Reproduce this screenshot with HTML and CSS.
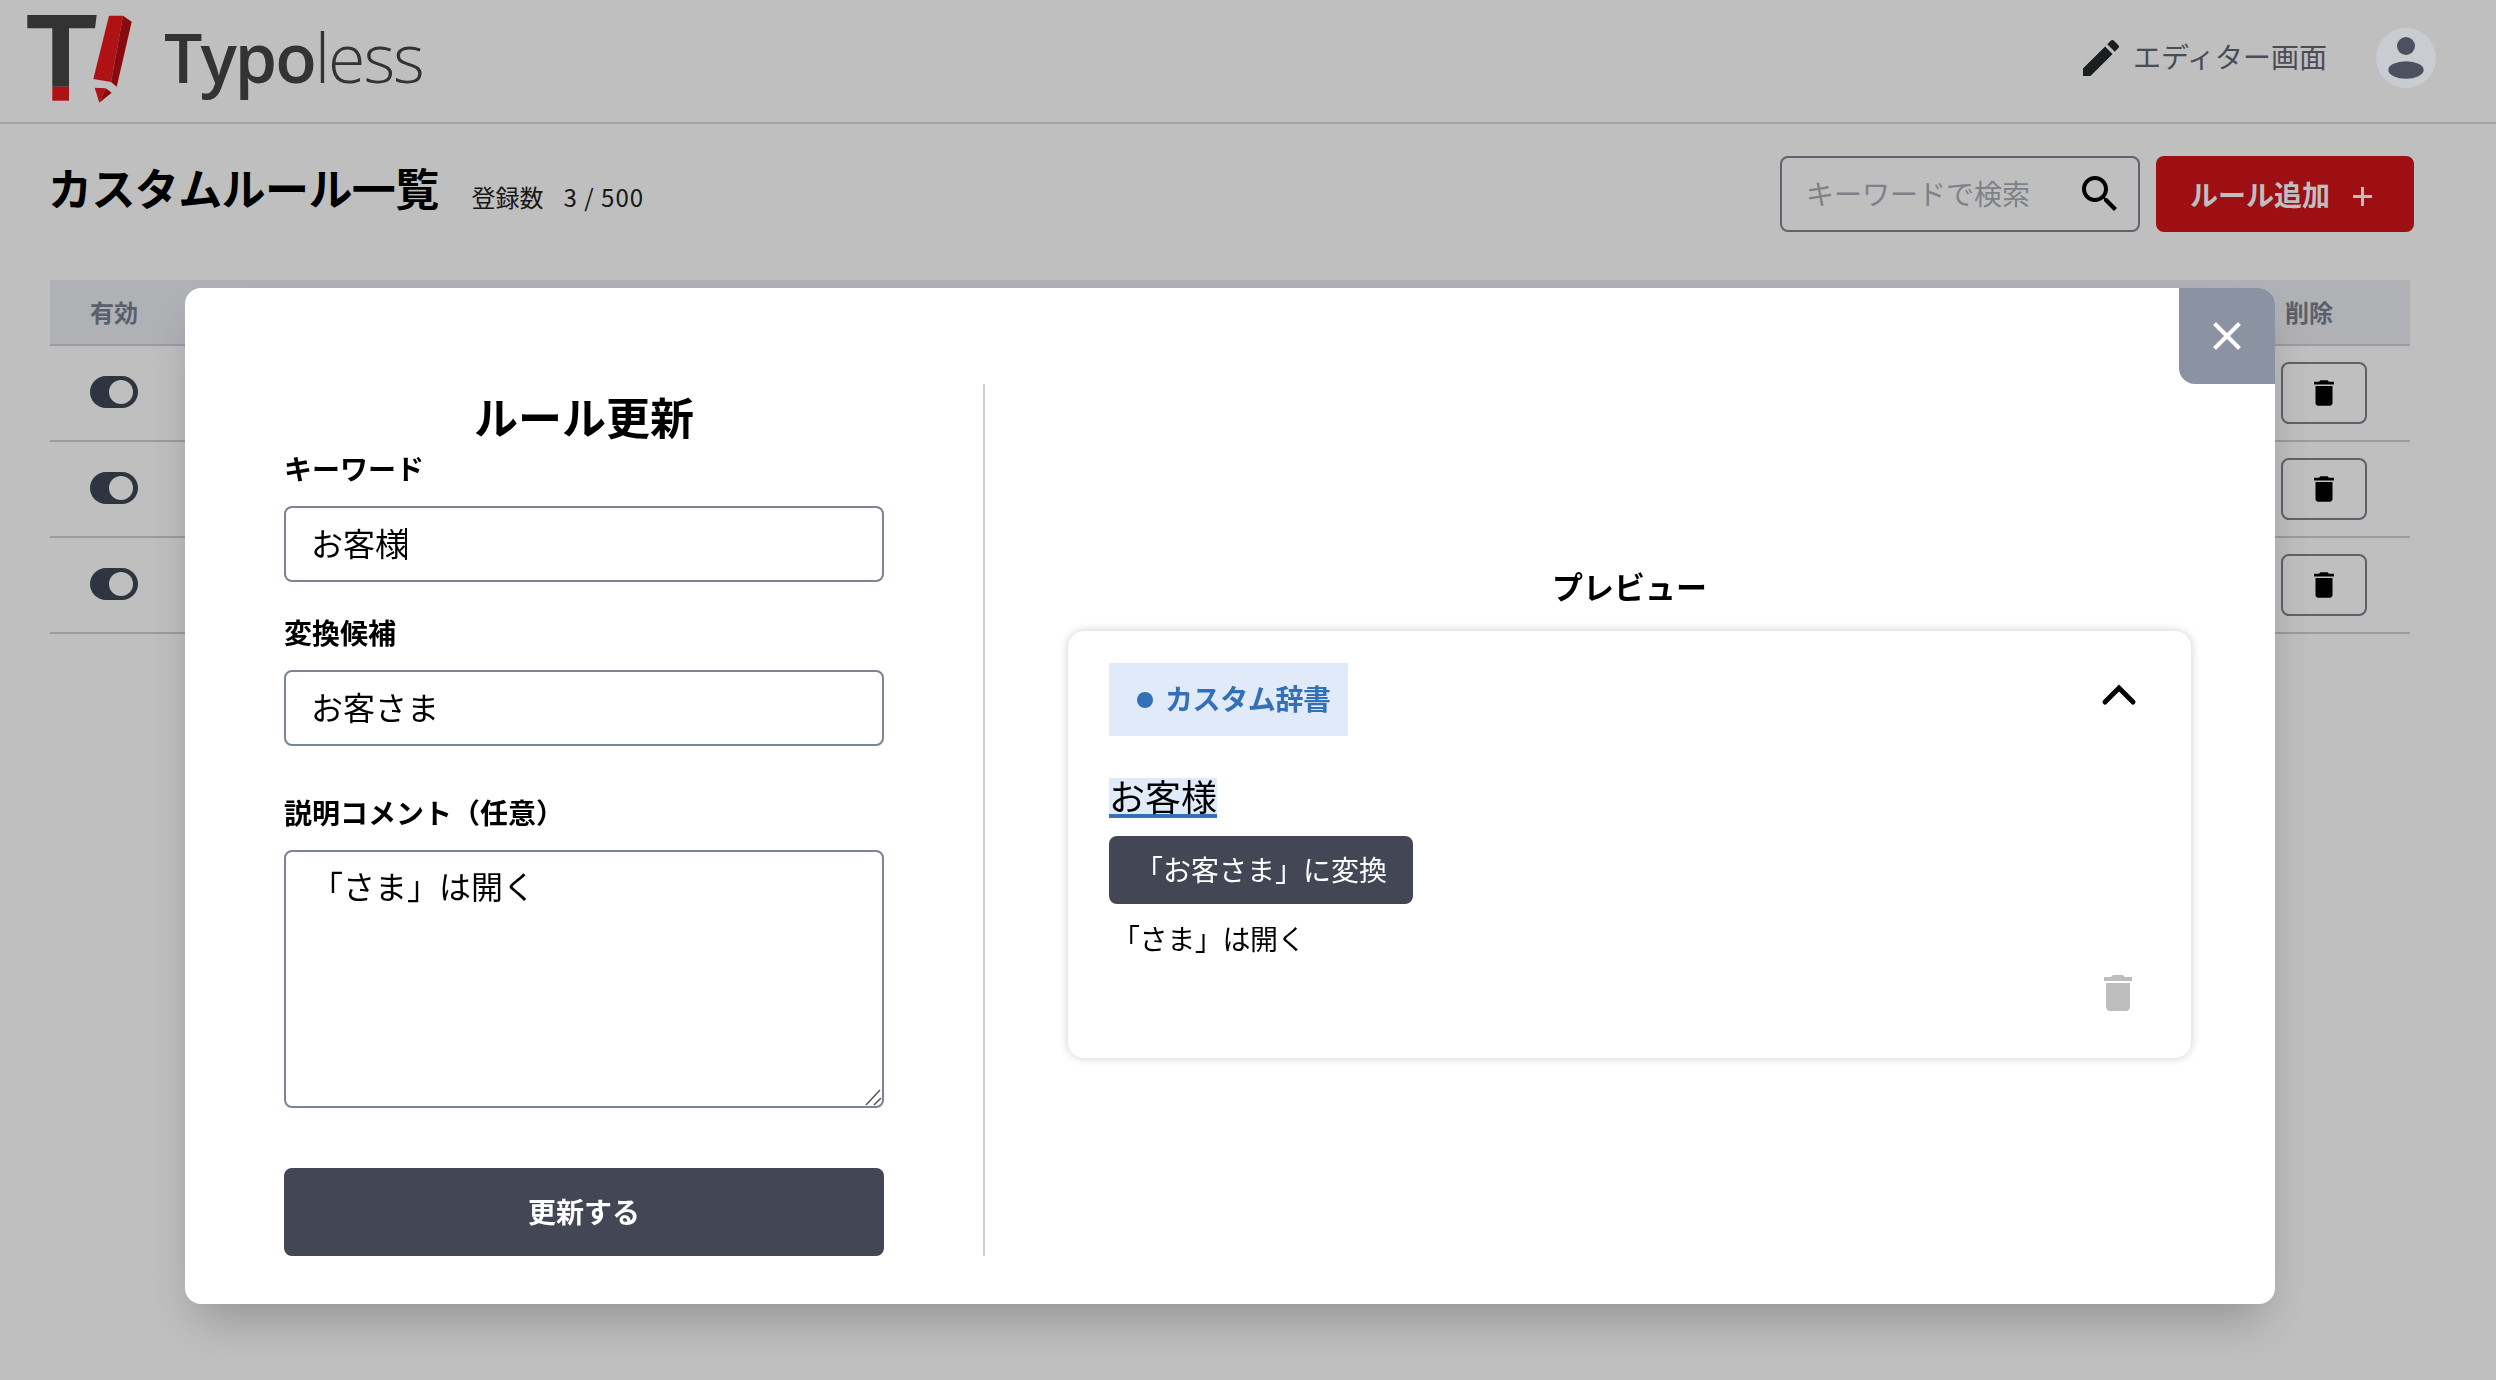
FILE: index.html
```html
<!DOCTYPE html>
<html lang="ja">
<head>
    <meta charset="UTF-8">
    <meta name="viewport" content="width=device-width, initial-scale=1.0">
    <title>カスタムルール一覧 - Typoless</title>
    <link rel="stylesheet" href="styles.css">
</head>
<body>
    <svg class="icon-defs" width="0" height="0" aria-hidden="true">
        <symbol id="icon-delete" viewBox="0 0 24 24">
            <path d="M6 19c0 1.1.9 2 2 2h8c1.1 0 2-.9 2-2V7H6v12zM19 4h-3.5l-1-1h-5l-1 1H5v2h14V4z"/>
        </symbol>
    </svg>

    <header class="site-header">
        <svg class="logo-mark" viewBox="0 0 130 110" aria-hidden="true">
            <path fill="#444" d="M17.3 10H86.7L85 23.3H59V81.7H42.3V23.3H17.3z"/>
            <path fill="#ea181c" d="M42.3 81.7H59V95.7H42.3z"/>
            <path fill="#ea181c" d="M99 10.7H113L101 77 83.3 74z"/>
            <path fill="#b80d13" d="M113 10.7L121.7 16.7 106.7 81.7 101 77z"/>
            <path fill="#ea181c" d="M84.7 82.7L95.7 83.3 89.3 97.7z"/>
            <path fill="#b80d13" d="M95.7 83.3L101.7 87.7 89.3 97.7z"/>
        </svg>
        <div class="logo-text"><span class="logo-strong">Typo</span><span class="logo-light">less</span></div>
        <nav class="header-nav">
            <svg class="icon-edit" viewBox="0 0 24 24" aria-hidden="true">
                <path d="M3 17.25V21h3.75L17.81 9.94l-3.75-3.75L3 17.25zM20.71 7.04c.39-.39.39-1.02 0-1.41l-2.34-2.34c-.39-.39-1.02-.39-1.41 0l-1.83 1.83 3.75 3.75 1.83-1.83z"/>
            </svg>
            <span class="nav-label">エディター画面</span>
            <svg class="avatar" viewBox="0 0 60 60" aria-hidden="true">
                <circle cx="30" cy="30" r="30" fill="#c9ccd0"/>
                <circle cx="30" cy="18" r="9" fill="#4c5060"/>
                <ellipse cx="30" cy="42" rx="17.7" ry="8.7" fill="#4c5060"/>
            </svg>
        </nav>
    </header>

    <main class="rules-page">
        <div class="page-head">
            <h1 class="page-title">カスタムルール一覧</h1>
            <span class="rule-count">登録数<span class="rule-count-value">3 / 500</span></span>
            <div class="search-box">
                <input class="search-input" type="text" placeholder="キーワードで検索">
                <svg class="icon-search" viewBox="0 0 24 24" aria-hidden="true">
                    <path d="M15.5 14h-.79l-.28-.27C15.41 12.59 16 11.11 16 9.5 16 5.91 13.09 3 9.5 3S3 5.91 3 9.5 5.91 16 9.5 16c1.61 0 3.09-.59 4.23-1.57l.27.28v.79l5 4.99L20.49 19l-4.99-5zm-6 0C7.01 14 5 11.99 5 9.5S7.01 5 9.5 5 14 7.01 14 9.5 11.99 14 9.5 14z"/>
                </svg>
            </div>
            <button class="add-button">
                <span>ルール追加</span>
                <svg class="icon-plus" viewBox="0 0 21 21" aria-hidden="true"><path d="M10.5 1V20M1 10.5H20"/></svg>
            </button>
        </div>

        <div class="rules-table">
            <div class="table-row table-head">
                <span class="col-active">有効</span>
                <span class="col-delete">削除</span>
            </div>
            <div class="table-row">
                <div class="col-active"><span class="toggle"><span class="toggle-knob"></span></span></div>
                <div class="col-delete"><button class="delete-button"><svg class="icon-delete"><use href="#icon-delete"/></svg></button></div>
            </div>
            <div class="table-row">
                <div class="col-active"><span class="toggle"><span class="toggle-knob"></span></span></div>
                <div class="col-delete"><button class="delete-button"><svg class="icon-delete"><use href="#icon-delete"/></svg></button></div>
            </div>
            <div class="table-row">
                <div class="col-active"><span class="toggle"><span class="toggle-knob"></span></span></div>
                <div class="col-delete"><button class="delete-button"><svg class="icon-delete"><use href="#icon-delete"/></svg></button></div>
            </div>
        </div>
    </main>

    <div class="overlay">
        <div class="modal">
            <button class="close-button" aria-label="閉じる">
                <svg viewBox="0 0 28 28" aria-hidden="true"><path d="M1.5 1.5L26.5 26.5M26.5 1.5L1.5 26.5"/></svg>
            </button>

            <form class="rule-form">
                <h2 class="form-title">ルール更新</h2>
                <div class="field field-keyword">
                    <label class="field-label">キーワード</label>
                    <input class="field-input" type="text" value="お客様">
                    <span class="caret"></span>
                </div>
                <div class="field field-candidate">
                    <label class="field-label">変換候補</label>
                    <input class="field-input" type="text" value="お客さま">
                </div>
                <div class="field field-comment">
                    <label class="field-label">説明コメント（任意）</label>
                    <textarea class="field-textarea">「さま」は開く</textarea>
                    <svg class="resize-grip" viewBox="0 0 20 20" aria-hidden="true"><path d="M16 2L2 17M17 10L10 17"/></svg>
                </div>
                <button class="submit-button" type="button">更新する</button>
            </form>

            <section class="preview">
                <h3 class="preview-title">プレビュー</h3>
                <div class="preview-card">
                    <div class="card-top">
                        <span class="card-badge"><span class="badge-dot"></span>カスタム辞書</span>
                        <svg class="icon-chevron" viewBox="0 0 36 24" aria-hidden="true"><path d="M4 19L18 5 32 19"/></svg>
                    </div>
                    <div class="card-word"><span class="word-mark">お客様</span></div>
                    <button class="replace-button" type="button">「お客さま」に変換</button>
                    <p class="card-comment">「さま」は開く</p>
                    <div class="card-actions"><svg class="icon-delete-muted"><use href="#icon-delete"/></svg></div>
                </div>
            </section>
        </div>
    </div>
</body>
</html>
```

FILE: styles.css
```css
* {
    box-sizing: border-box;
}
body {
    font-family: "Noto Sans CJK JP", "Noto Sans", sans-serif;
    background: white;
    margin: 0;
    min-height: 100vh;
    color: black;
    overflow: hidden;
}
button,
input,
textarea {
    font-family: inherit;
    color: inherit;
}
.icon-defs {
    position: absolute;
}

/* header */
.site-header {
    display: flex;
    height: 124px;
    padding-left: 10px;
    border-bottom: 2px solid #d9dbe3;
}
.logo-mark {
    width: 130px;
    height: 110px;
    margin-top: 5px;
}
.logo-text {
    margin-left: 24px;
    padding-top: 9px;
    font-family: "Open Sans", sans-serif;
    font-size: 68px;
    line-height: 96px;
    color: #444;
    letter-spacing: -2px;
}
.logo-strong {
    font-weight: 600;
}
.logo-light {
    font-weight: 300;
}
.header-nav {
    display: flex;
    align-items: center;
    margin-left: auto;
    padding: 0 60px 6px 0;
}
.icon-edit {
    width: 48px;
    height: 48px;
    margin: 0 8px 0 0;
    fill: #252829;
}
.nav-label {
    padding-bottom: 4px;
    font-size: 28px;
    color: #636772;
}
.avatar {
    position: relative;
    z-index: 20;
    width: 60px;
    height: 60px;
    margin-left: 49px;
}

/* page */
.page-head {
    display: flex;
    align-items: center;
    height: 76px;
    margin-top: 32px;
    padding: 0 82px 0 48px;
}
.page-title {
    margin: 0 0 14px;
    font-size: 44px;
    line-height: 64px;
    font-weight: 700;
    letter-spacing: -0.6px;
}
.rule-count {
    margin-left: 33px;
    padding-top: 4px;
    font-size: 24px;
    color: #222;
}
.rule-count-value {
    margin-left: 20px;
    letter-spacing: 1px;
}
.search-box {
    display: flex;
    align-items: center;
    width: 360px;
    height: 76px;
    margin-left: auto;
    padding: 0 14px 0 24px;
    border: 2px solid #7d8594;
    border-radius: 8px;
}
.search-input {
    flex: 1;
    min-width: 0;
    padding: 0 0 3px;
    border: none;
    outline: none;
    background: none;
    font-size: 28px;
}
.search-input::placeholder {
    color: #a9adb5;
}
.icon-search {
    width: 48px;
    height: 48px;
    flex-shrink: 0;
}
.add-button {
    display: flex;
    align-items: center;
    gap: 22px;
    width: 258px;
    height: 76px;
    margin-left: 16px;
    padding: 0 0 0 34px;
    border: none;
    border-radius: 8px;
    background: #d3141a;
    color: white;
    font-size: 28px;
    font-weight: 700;
}
.icon-plus {
    width: 21px;
    height: 21px;
    margin-top: 4px;
    fill: none;
    stroke: white;
    stroke-width: 3;
}

/* table */
.rules-table {
    margin: 48px 86px 0 50px;
}
.table-row {
    display: flex;
    align-items: center;
    justify-content: space-between;
    height: 96px;
    border-bottom: 2px solid #cdd0dc;
}
.table-head {
    height: 66px;
    padding-bottom: 2px;
    background: #ebedf1;
    color: #78808f;
    font-size: 24px;
    font-weight: 700;
}
.col-active {
    padding-left: 40px;
}
.col-delete {
    width: 129px;
}
.table-head .col-delete {
    padding-left: 4px;
}
.toggle {
    display: flex;
    align-items: center;
    justify-content: flex-end;
    width: 48px;
    height: 32px;
    margin-bottom: 2px;
    padding-right: 5px;
    border-radius: 16px;
    background: #3f4755;
}
.toggle-knob {
    width: 24px;
    height: 24px;
    border-radius: 50%;
    background: white;
}
.delete-button {
    display: flex;
    align-items: center;
    justify-content: center;
    width: 86px;
    height: 62px;
    padding: 0;
    border: 2px solid #79838f;
    border-radius: 8px;
    background: none;
}
.icon-delete {
    width: 34px;
    height: 34px;
    fill: black;
}

/* modal */
.overlay {
    position: fixed;
    inset: 0;
    z-index: 10;
    display: flex;
    padding: 288px 221px 76px 185px;
    background: rgba(0, 0, 0, 0.25);
}
.modal {
    position: relative;
    display: flex;
    flex: 1;
    padding: 96px 0 48px;
    border-radius: 16px;
    background: white;
    box-shadow: 0 25px 50px -12px rgba(0, 0, 0, 0.25);
}
.close-button {
    position: absolute;
    top: 0;
    right: 0;
    width: 96px;
    height: 96px;
    padding: 0;
    border: none;
    border-radius: 0 16px 0 16px;
    background: #8b93a3;
}
.close-button svg {
    display: block;
    width: 28px;
    height: 28px;
    margin: auto;
    fill: none;
    stroke: white;
    stroke-width: 4;
}
.rule-form {
    width: 800px;
    padding: 0 99px;
    border-right: 2px solid #d1d1d1;
}
.form-title {
    margin: 0;
    font-size: 44px;
    line-height: 65px;
    font-weight: 700;
    text-align: center;
}
.field {
    position: relative;
}
.field-keyword {
    margin-bottom: 31px;
}
.field-candidate {
    margin-bottom: 47px;
}
.field-comment {
    margin-bottom: 60px;
}
.field-label {
    display: block;
    margin-bottom: 18px;
    font-size: 28px;
    line-height: 39px;
    font-weight: 700;
}
.field-input {
    display: block;
    width: 100%;
    height: 76px;
    padding: 0 25px 5px;
    border: 2px solid #7b8494;
    border-radius: 8px;
    font-size: 32px;
}
.caret {
    position: absolute;
    left: 121px;
    top: 79px;
    width: 2px;
    height: 32px;
    background: black;
}
.field-textarea {
    display: block;
    width: 100%;
    height: 258px;
    padding: 10px 25px;
    border: 2px solid #7b8494;
    border-radius: 8px;
    font-size: 32px;
    line-height: 46px;
    resize: none;
}
.resize-grip {
    position: absolute;
    right: 0;
    bottom: 0;
    width: 20px;
    height: 20px;
    fill: none;
    stroke: #555;
    stroke-width: 1.5;
}
.submit-button {
    display: block;
    width: 100%;
    height: 88px;
    padding-bottom: 4px;
    border: none;
    border-radius: 8px;
    background: #434654;
    color: white;
    font-size: 28px;
    font-weight: 700;
}

/* preview */
.preview {
    flex: 1;
    padding: 180px 84px 0 83px;
}
.preview-title {
    margin: 0 0 22px;
    padding-bottom: 2px;
    font-size: 31px;
    line-height: 43px;
    font-weight: 700;
    text-align: center;
}
.preview-card {
    height: 427px;
    padding: 32px 49px 0 41px;
    border-radius: 16px;
    box-shadow: 0 0 10px rgba(0, 0, 0, 0.2);
}
.card-top {
    display: flex;
    justify-content: space-between;
}
.card-badge {
    display: flex;
    align-items: center;
    width: 239px;
    height: 73px;
    padding: 0 0 3px 28px;
    background: #e0eaf8;
    color: #3470b8;
    font-size: 28px;
    font-weight: 700;
    letter-spacing: -0.4px;
}
.badge-dot {
    width: 16px;
    height: 16px;
    margin: 3px 12px 0 0;
    border-radius: 50%;
    background: #3470b8;
}
.icon-chevron {
    width: 36px;
    height: 24px;
    margin: 20px 5px 0 0;
    fill: none;
    stroke: black;
    stroke-width: 5;
    stroke-linecap: round;
}
.card-word {
    margin-top: 42px;
}
.word-mark {
    display: inline-block;
    height: 40px;
    border-bottom: 4px solid #3470b8;
    background: #e0eaf8;
    font-size: 36px;
    line-height: 34px;
}
.replace-button {
    display: block;
    width: 304px;
    height: 68px;
    margin-top: 18px;
    padding: 0 0 3px 26px;
    border: none;
    border-radius: 8px;
    background: #434654;
    color: white;
    font-size: 28px;
    text-align: left;
}
.card-comment {
    margin: 13px 0 0;
    padding-left: 3px;
    font-size: 28px;
    line-height: 42px;
    letter-spacing: -0.4px;
}
.card-actions {
    display: flex;
    justify-content: flex-end;
    margin-top: 10px;
}
.icon-delete-muted {
    width: 48px;
    height: 48px;
    fill: #bdbdbd;
}
```
